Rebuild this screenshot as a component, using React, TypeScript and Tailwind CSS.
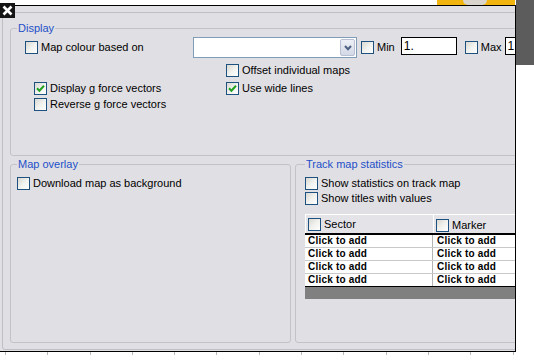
import type { ReactNode } from "react"

function CheckBox({ checked = false }: { checked?: boolean }) {
  return (
    <span className="flex h-[13px] w-[13px] shrink-0 items-center justify-center border border-[#1c5180] bg-linear-to-br from-[#d9d8d2] via-[#f1f1ee] to-white">
      {checked && (
        <svg width="9" height="9" viewBox="0 0 9 9">
          <path d="M1 4.3 L3.4 6.7 L8 1.8" fill="none" stroke="#21a121" strokeWidth="2" />
        </svg>
      )}
    </span>
  )
}

function Option({ label, checked }: { label: string; checked?: boolean }) {
  return (
    <label className="flex h-[13px] items-center gap-[3px] whitespace-nowrap">
      <CheckBox checked={checked} />
      <span>{label}</span>
    </label>
  )
}

function Group({ title, className, children }: { title: string; className: string; children: ReactNode }) {
  return (
    <fieldset className={`shrink-0 rounded-[3px] border border-[#c3c2c8] ${className}`}>
      <legend className="ml-[6px] px-px leading-[14px] text-[#1d4fc9]">{title}</legend>
      {children}
    </fieldset>
  )
}

const rows = [0, 1, 2, 3]

export default function App() {
  return (
    <div className="relative flex h-[362px] w-[534px] overflow-hidden bg-white font-['Liberation_Sans',Arial,sans-serif] text-[11px] leading-[13px] text-black">
      <div className="flex w-[516px] shrink-0 flex-col">
        {/* bit of the window behind, above the panel */}
        <div className="flex h-[5px]">
          <div className="ml-[437px] flex h-[5px] w-[78px] bg-[#f2b50f]">
            <div className="ml-[26px] h-[5px] w-[24px] rounded-b-full bg-[#d9d5cc]" />
          </div>
        </div>

        <div className="h-[347px] overflow-hidden border-t border-r border-b border-black bg-[#e0dfe3]">
          <div className="mt-[6px] ml-[2px] h-[338px] w-[540px] rounded-l-[3px] border border-[#bfbec4]">
            <Group title="Display" className="mt-[8px] ml-[7px] h-[135px] w-[540px]">
              <div className="mt-[2px] flex h-[21px] items-center pl-[14px]">
                <div className="w-[168px]">
                  <Option label="Map colour based on" />
                </div>
                <div className="flex h-[21px] w-[164px] justify-end border border-[#7f9db9] bg-white p-px">
                  <div className="flex w-[15px] items-center justify-center rounded-[2px] border border-[#b7c0d2] bg-linear-to-b from-[#eef0f6] to-[#d3d9e6]">
                    <svg width="8" height="6" viewBox="0 0 8 6">
                      <path d="M1 1 L4 4.2 L7 1" fill="none" stroke="#4d6185" strokeWidth="2" />
                    </svg>
                  </div>
                </div>
                <div className="ml-[4px]">
                  <Option label="Min" />
                </div>
                <div className="ml-[6px] h-[18px] w-[56px] self-start border border-black bg-white px-[2px] text-[12px] leading-[16px]">
                  1.
                </div>
                <div className="ml-[8px]">
                  <Option label="Max" />
                </div>
                <div className="ml-[3px] h-[18px] w-[40px] self-start border border-black bg-white px-[2px] text-[12px] leading-[16px]">
                  1.
                </div>
              </div>

              <div className="mt-[6px] flex pl-[215px]">
                <Option label="Offset individual maps" />
              </div>
              <div className="mt-[5px] flex pl-[23px]">
                <div className="w-[192px]">
                  <Option label="Display g force vectors" checked />
                </div>
                <Option label="Use wide lines" checked />
              </div>
              <div className="mt-[3px] flex pl-[23px]">
                <Option label="Reverse g force vectors" />
              </div>
            </Group>

            <div className="mt-px flex">
              <Group title="Map overlay" className="ml-[7px] h-[186px] w-[281px]">
                <div className="mt-[6px] pl-[6px]">
                  <Option label="Download map as background" />
                </div>
              </Group>

              <Group title="Track map statistics" className="ml-[4px] h-[186px] w-[240px] [&>legend]:ml-[9px]">
                <div className="mt-[6px] flex flex-col gap-[2px] pl-[9px]">
                  <Option label="Show statistics on track map" />
                  <Option label="Show titles with values" />
                </div>

                <div className="mt-[9px] ml-[9px] w-[256px]">
                  <div className="flex h-[21px] border-b-2 border-black bg-[#e4e3e8]">
                    <div className="flex w-[128px] items-center gap-[3px] border-t border-l border-white border-r-[#8a8a8a] pl-[2px]">
                      <CheckBox />
                      <span>Sector</span>
                    </div>
                    <div className="flex w-[128px] items-center gap-[3px] border-t border-l border-white pt-[3px] pl-[2px]">
                      <CheckBox />
                      <span>Marker</span>
                    </div>
                  </div>
                  {rows.map((r) => (
                    <div
                      key={r}
                      className={`flex h-[13px] bg-white text-[10px] leading-[12px] font-bold tracking-[0.2px] ${
                        r === 3 ? "border-b border-black" : "border-b border-[#c9c9c9]"
                      }`}
                    >
                      <div className="w-[128px] border-r border-[#b4b4b4] pl-[3px]">Click to add</div>
                      <div className="w-[128px] pl-[4px]">Click to add</div>
                    </div>
                  ))}
                  <div className="h-[12px] bg-[#808080]" />
                </div>
              </Group>
            </div>
          </div>
        </div>

        {/* ruler ticks under the panel */}
        <div className="flex h-[10px] pl-[5px]">
          {[0, 1, 2, 3, 4, 5, 6, 7, 8, 9, 10, 11, 12].map((i) => (
            <div key={i} className="w-[42.3px] shrink-0">
              <div className="h-[3px] w-px bg-[#b8b8b8]" />
            </div>
          ))}
        </div>
      </div>

      <div className="w-[18px] shrink-0">
        <div className="h-[65px] bg-[#5c5c5c]" />
      </div>

      <div className="absolute top-[3px] left-0 flex h-[15px] w-[15px] items-center justify-center bg-[#151515]">
        <svg width="11" height="11" viewBox="0 0 11 11">
          <path d="M1.5 1.5 L9.5 9.5 M9.5 1.5 L1.5 9.5" stroke="white" strokeWidth="2.6" />
        </svg>
      </div>
    </div>
  )
}
